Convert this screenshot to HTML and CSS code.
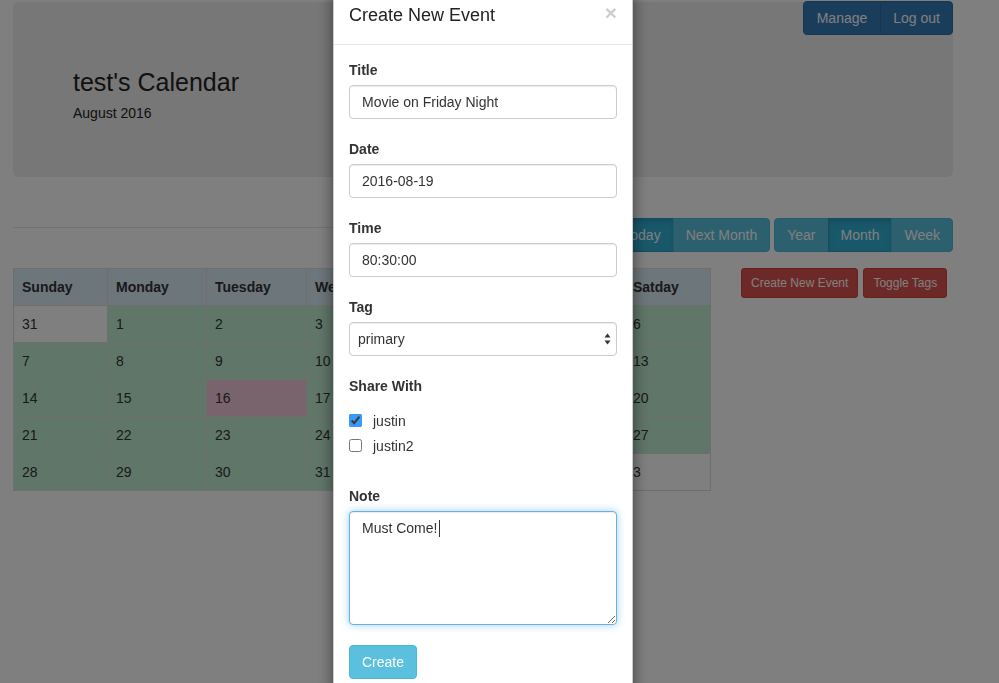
FILE: index.html
```html
<!DOCTYPE html>
<html>
<head>
<meta charset="utf-8">
<title>test's Calendar</title>
<link rel="stylesheet" href="styles.css">
</head>
<body>
<div class="page">
  <div class="jumbotron">
    <div class="btn-group top-actions">
      <button class="btn btn-primary">Manage</button><button class="btn btn-primary">Log out</button>
    </div>
    <h1 class="cal-title">test's Calendar</h1>
    <p class="cal-sub">August 2016</p>
  </div>

  <div class="toolbar">
    <div class="rule"></div>
    <div class="btn-group">
      <button class="btn btn-info">Previous Month</button><button class="btn btn-info active">Today</button><button class="btn btn-info">Next Month</button>
    </div>
    <div class="btn-group">
      <button class="btn btn-info">Year</button><button class="btn btn-info active">Month</button><button class="btn btn-info">Week</button>
    </div>
  </div>

  <div class="main-row">
    <table class="cal">
      <colgroup>
        <col class="c-sun"><col class="c-mon"><col class="c-tue"><col class="c-wed"><col class="c-thu"><col class="c-fri"><col class="c-sat">
      </colgroup>
      <thead>
        <tr class="info"><th>Sunday</th><th>Monday</th><th>Tuesday</th><th>Wednesday</th><th>Thursday</th><th>Friday</th><th>Satday</th></tr>
      </thead>
      <tbody>
        <tr><td>31</td><td class="success">1</td><td class="success">2</td><td class="success">3</td><td class="success">4</td><td class="success">5</td><td class="success">6</td></tr>
        <tr><td class="success">7</td><td class="success">8</td><td class="success">9</td><td class="success">10</td><td class="success">11</td><td class="success">12</td><td class="success">13</td></tr>
        <tr><td class="success">14</td><td class="success">15</td><td class="danger">16</td><td class="success">17</td><td class="success">18</td><td class="success">19</td><td class="success">20</td></tr>
        <tr><td class="success">21</td><td class="success">22</td><td class="success">23</td><td class="success">24</td><td class="success">25</td><td class="success">26</td><td class="success">27</td></tr>
        <tr><td class="success">28</td><td class="success">29</td><td class="success">30</td><td class="success">31</td><td>1</td><td>2</td><td>3</td></tr>
      </tbody>
    </table>
    <div class="side">
      <button class="btn btn-danger btn-sm">Create New Event</button>
      <button class="btn btn-danger btn-sm">Toggle Tags</button>
    </div>
  </div>
</div>

<div class="backdrop"></div>
<div class="modal">
  <div class="modal-dialog">
    <div class="modal-content">
      <div class="modal-header">
        <button class="close">&times;</button>
        <h4 class="modal-title">Create New Event</h4>
      </div>
      <div class="modal-body">
        <div class="form-group">
          <label>Title</label>
          <input class="form-control" type="text" value="Movie on Friday Night">
        </div>
        <div class="form-group">
          <label>Date</label>
          <input class="form-control" type="text" value="2016-08-19">
        </div>
        <div class="form-group">
          <label>Time</label>
          <input class="form-control" type="text" value="80:30:00">
        </div>
        <div class="form-group">
          <label>Tag</label>
          <div class="select-wrap">
            <select class="form-control select">
              <option>primary</option>
            </select>
            <svg class="select-arrows" width="7" height="12" viewBox="0 0 7 12"><path d="M3.5 0.5 L6.5 4.5 L0.5 4.5 Z M3.5 11.5 L6.5 7.5 L0.5 7.5 Z" fill="#333"/></svg>
          </div>
        </div>
        <div class="form-group">
          <label>Share With</label>
          <div class="checkbox"><label class="check-label"><input type="checkbox" checked> justin</label></div>
          <div class="checkbox"><label class="check-label"><input type="checkbox"> justin2</label></div>
        </div>
        <div class="form-group">
          <label>Note</label>
          <div class="note-wrap">
            <textarea class="form-control note">Must Come!</textarea>
            <span class="caret-line"></span>
          </div>
        </div>
        <button class="btn btn-info create">Create</button>
      </div>
    </div>
  </div>
</div>
</body>
</html>
```

FILE: styles.css
```css
* { box-sizing: border-box; }

html, body {
  margin: 0;
  padding: 0;
  height: 100%;
  overflow: hidden;
}

body {
  font-family: "Liberation Sans", Helvetica, Arial, sans-serif;
  font-size: 14px;
  line-height: 1.42857;
  color: #333;
  background: #fff;
}

.page {
  width: 940px;
  margin-left: 13px;
  padding-top: 2px;
}

/* buttons */
.btn {
  display: inline-block;
  font-family: inherit;
  font-size: 14px;
  line-height: 20px;
  padding: 6px 12px;
  border: 1px solid transparent;
  border-radius: 4px;
  color: #fff;
  cursor: pointer;
  margin: 0;
}
.btn-sm {
  font-size: 12px;
  line-height: 18px;
  padding: 5px 9px;
  border-radius: 3px;
}
.btn-primary { background: #337ab7; border-color: #2e6da4; }
.btn-info { background: #5bc0de; border-color: #46b8da; }
.btn-info.active { background: #31b0d5; border-color: #269abc; box-shadow: inset 0 3px 5px rgba(0,0,0,.125); }
.btn-danger { background: #d9534f; border-color: #d43f3a; }

.btn-group { display: inline-flex; }
.btn-group .btn { border-radius: 0; }
.btn-group .btn + .btn { margin-left: -1px; }
.btn-group .btn:first-child { border-radius: 4px 0 0 4px; }
.btn-group .btn:last-child { border-radius: 0 4px 4px 0; }
.top-actions .btn:first-child { padding: 6px 13px; }

/* jumbotron */
.jumbotron {
  background: #eee;
  border-radius: 6px;
  height: 175px;
  padding-left: 60px;
  display: flex;
  flex-direction: column;
}
.top-actions {
  align-self: flex-end;
  margin-top: -1px;
}
.cal-title {
  margin: 33px 0 0;
  font-size: 25px;
  line-height: 28px;
  font-weight: 500;
  color: #222;
}
.cal-sub {
  margin: 7px 0 0;
  font-size: 14px;
  line-height: 20px;
  color: #222;
}

/* toolbar */
.toolbar {
  display: flex;
  align-items: flex-start;
  gap: 4px;
  margin-top: 41px;
}
.rule {
  flex: 1;
  border-top: 1px solid #e6e6e6;
  margin-top: 9px;
}

/* main row */
.main-row {
  display: flex;
  align-items: flex-start;
  margin-top: 16px;
}
.cal {
  width: 697px;
  table-layout: fixed;
  border-collapse: collapse;
  border: 1px solid #ddd;
}
.c-sun { width: 94px; }
.c-mon { width: 99px; }
.c-tue { width: 100px; }
.c-wed { width: 114px; }
.c-thu { width: 108px; }
.c-fri { width: 96px; }
.c-sat { width: 86px; }
.cal th, .cal td {
  padding: 8px;
  line-height: 20px;
  text-align: left;
  border: 1px solid #ddd;
  background: #fff;
}
.cal thead th {
  font-weight: bold;
  background: #d9edf7;
}
.cal td.success { background: #c0ecd2; }
.cal td.danger { background: #f2c6d8; }

.side {
  margin-left: 30px;
  display: flex;
  gap: 5px;
}

/* modal */
.backdrop {
  position: fixed;
  inset: 0;
  background: rgba(0,0,0,.5);
}
.modal {
  position: fixed;
  inset: 0;
}
.modal-dialog {
  width: 300px;
  margin-left: 333px;
  margin-top: -13px;
}
.modal-content {
  background: #fff;
  border: 1px solid rgba(0,0,0,.2);
  border-radius: 6px;
  box-shadow: 0 5px 15px rgba(0,0,0,.5);
}
.modal-header {
  padding: 15px;
  border-bottom: 1px solid #e5e5e5;
}
.modal-title {
  margin: 0;
  font-size: 18px;
  line-height: 1.42857;
  font-weight: 500;
  color: #222;
}
.close {
  float: right;
  background: none;
  border: 0;
  padding: 0;
  margin-top: -1px;
  font-family: inherit;
  font-size: 21px;
  font-weight: bold;
  line-height: 1;
  color: #000;
  opacity: .2;
}
.modal-body {
  padding: 15px;
}
.form-group {
  display: flow-root;
  margin-bottom: 20px;
}
.form-group > label {
  display: inline-block;
  font-weight: bold;
  margin-bottom: 5px;
  line-height: 20px;
}
.form-control {
  display: block;
  width: 100%;
  height: 34px;
  padding: 6px 12px;
  font-family: inherit;
  font-size: 14px;
  line-height: 20px;
  color: #333;
  background: #fff;
  border: 1px solid #ccc;
  border-radius: 4px;
  box-shadow: inset 0 1px 1px rgba(0,0,0,.075);
}
.select-wrap { position: relative; }
.select {
  appearance: none;
  -webkit-appearance: none;
  padding-left: 8px;
}
.select-arrows {
  position: absolute;
  right: 6px;
  top: 11px;
}
.checkbox {
  margin: 10px 0;
}
.checkbox + .checkbox { margin-top: -5px; }
.check-label {
  display: flex;
  align-items: center;
  line-height: 20px;
  font-weight: normal;
}
.check-label input {
  width: 13px;
  height: 13px;
  margin: 0 11px 0 0;
  accent-color: #3b99fc;
}
.note-wrap { position: relative; }
.note {
  height: 114px;
  border-color: #66afe9;
  resize: vertical;
  box-shadow: inset 0 1px 1px rgba(0,0,0,.075), 0 0 8px rgba(102,175,233,.6);
  outline: none;
}
.caret-line {
  position: absolute;
  left: 90px;
  top: 9px;
  width: 1px;
  height: 17px;
  background: #333;
}
.create {
  color: #fff;
}
```
